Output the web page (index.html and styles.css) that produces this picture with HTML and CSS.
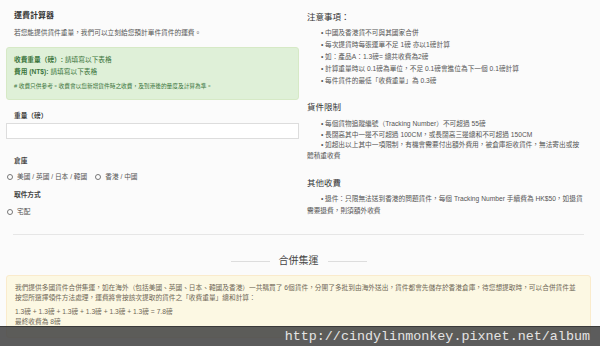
FILE: index.html
```html
<!DOCTYPE html>
<html lang="zh-Hant">
<head>
    <meta charset="UTF-8">
    <meta name="viewport" content="width=device-width, initial-scale=1.0">
    <title>運費計算器</title>
    <link rel="stylesheet" href="styles.css">
</head>
<body>
    <div class="page">
        <div class="cols">
            <div class="calc">
                <h2 class="title">運費計算器</h2>
                <p class="lead">若您能提供貨件重量，我們可以立刻給您預計單件貨件的運費。</p>

                <div class="alert alert-success">
                    <p class="line"><strong>收費重量（磅）:</strong> 請填寫以下表格</p>
                    <p class="line"><strong>費用 (NT$):</strong> 請填寫以下表格</p>
                    <p class="small"># 收費只供參考。收費會以您新增貨件時之收費，及到港後的量度及計算為準。</p>
                </div>

                <div class="form-group">
                    <label class="label" for="weight">重量（磅）</label>
                    <input class="input" type="text" id="weight" name="weight">
                </div>

                <div class="form-group group-radio">
                    <span class="label">倉庫</span>
                    <div class="radios">
                        <label class="radio"><input type="radio" name="warehouse"> 美國 / 英國 / 日本 / 韓國</label>
                        <label class="radio"><input type="radio" name="warehouse"> 香港 / 中國</label>
                    </div>
                </div>

                <div class="form-group group-pickup">
                    <span class="label">取件方式</span>
                    <div class="radios">
                        <label class="radio"><input type="radio" name="pickup"> 宅配</label>
                    </div>
                </div>
            </div>

            <div class="notes">
                <h3 class="notes-title">注意事項：</h3>
                <ul class="list list-first">
                    <li>中國及香港貨不可與其國家合併</li>
                    <li>每次提貨時每張運單不足 1磅 亦以1磅計算</li>
                    <li>如：產品A：1.3磅= 總共收費為2磅</li>
                    <li>計算重量時以 0.1磅為單位，不足 0.1磅會進位為下一個 0.1磅計算</li>
                    <li>每件貨件的最低「收費重量」為 0.3磅</li>
                </ul>

                <h3 class="notes-title second">貨件限制</h3>
                <ul class="list">
                    <li>每個貨物追蹤編號（Tracking Number）不可超過 55磅</li>
                    <li>長闊高其中一邊不可超過 100CM，或長闊高三邊總和不可超過 150CM</li>
                    <li>如超出以上其中一項限制，有機會需要付出額外費用，被倉庫拒收貨件，無法寄出或按體積重收費</li>
                </ul>

                <h3 class="notes-title third">其他收費</h3>
                <ul class="list list-last">
                    <li>退件：只限無法送到香港的問題貨件，每個 Tracking Number 手續費為 HK$50，如退貨需要退費，則須額外收費</li>
                </ul>
            </div>
        </div>

        <div class="divider"></div>

        <h2 class="section-title"><span>合併集運</span></h2>

        <div class="alert alert-warning">
            <p>我們提供多國貨件合併集運，如在海外（包括美國、英國、日本、韓國及香港）一共購買了 6個貨件，分開了多批到由海外送出，貨件都會先儲存於香港倉庫，待您想提取時，可以合併貨件並按您所選擇領件方法處理，運費將會按該次提取的貨件之「收費重量」總和計算：</p>
            <p class="sum">1.3磅 + 1.3磅 + 1.3磅 + 1.3磅 + 1.3磅 + 1.3磅 = 7.8磅<br>最終收費為 8磅</p>
        </div>
    </div>

    <div class="watermark">http://cindylinmonkey.pixnet.net/album</div>
</body>
</html>
```

FILE: styles.css
```css
body { margin: 0; background: #fbfbfb; font-family: "Liberation Sans", "Noto Sans CJK TC", sans-serif; font-size: 6.7px; color: #555; }
p, h2, h3, ul { margin: 0; padding: 0; }

.page { padding: 0 9px 0 6px; }
.cols { display: flex; gap: 8px; padding-top: 10px; }
.calc { width: 293px; flex: none; }
.notes { flex: 1; padding-right: 6px; }

.title { font-size: 8px; line-height: 12px; font-weight: bold; color: #333; padding-left: 8px; }
.lead { line-height: 10px; margin-top: 6px; padding-left: 8px; }

.alert { border: 1px solid; border-radius: 3px; }
.alert-success { margin-top: 9px; padding: 6px 7px 8px; background: #dff0d8; border-color: #d6e9c6; color: #3c763d; }
.alert-success .line { line-height: 12px; }
.alert-success .small { font-size: 5.7px; line-height: 10px; margin-top: 3px; }

.form-group { margin-top: 11px; }
.group-radio { margin-top: 17px; }
.group-pickup { margin-top: 8px; }
.label { display: block; line-height: 10px; font-weight: bold; color: #444; padding-left: 8px; }
.input { display: block; box-sizing: border-box; width: 100%; height: 16px; margin-top: 2px; border: 1px solid #ddd; background: #fff; }
.radios { display: flex; gap: 8px; margin-top: 6px; padding-left: 1px; }
.group-pickup .radios { margin-top: 7px; }
.radio { display: flex; align-items: center; gap: 4px; line-height: 10px; }
.radio input { appearance: none; margin: 0; width: 6px; height: 6px; border: 1px solid #777; border-radius: 50%; background: #fff; }

.notes-title { font-size: 8.5px; line-height: 14px; font-weight: normal; color: #333; }
.notes-title.second { margin-top: 13px; }
.notes-title.third { margin-top: 15px; }
.list { list-style: none; margin-top: 5px; line-height: 10.6px; }
.list li { text-indent: 14px; }
.list li::before { content: "•"; display: inline-block; width: 4px; text-indent: 0; }
.list-first { margin-top: 3px; line-height: 12px; }
.list-last { margin-top: 3px; line-height: 11.5px; }

.divider { height: 1px; background: #e6e6e6; margin: 17px 7px 0 7px; }

.section-title { display: flex; justify-content: center; align-items: center; gap: 9px; margin-top: 19px; font-size: 10px; line-height: 14px; font-weight: normal; color: #444; }
.section-title::before, .section-title::after { content: ""; width: 39px; height: 1px; background: #ddd; }

.alert-warning { margin-top: 7px; padding: 7px 13px 10px 8px; background: #fcf8e3; border-color: #faebcc; color: #6f6756; line-height: 10px; }
.alert-warning .sum { margin-top: 4px; }

.watermark { position: absolute; left: 0; right: 0; top: 326px; height: 20px; box-sizing: border-box; padding-right: 10px; border-top: 1px solid #3a3a3a; background: rgba(70, 70, 70, 0.88); color: #e4e4e4; font-family: "Liberation Mono", monospace; font-size: 13.4px; line-height: 19px; text-align: right; }
```
